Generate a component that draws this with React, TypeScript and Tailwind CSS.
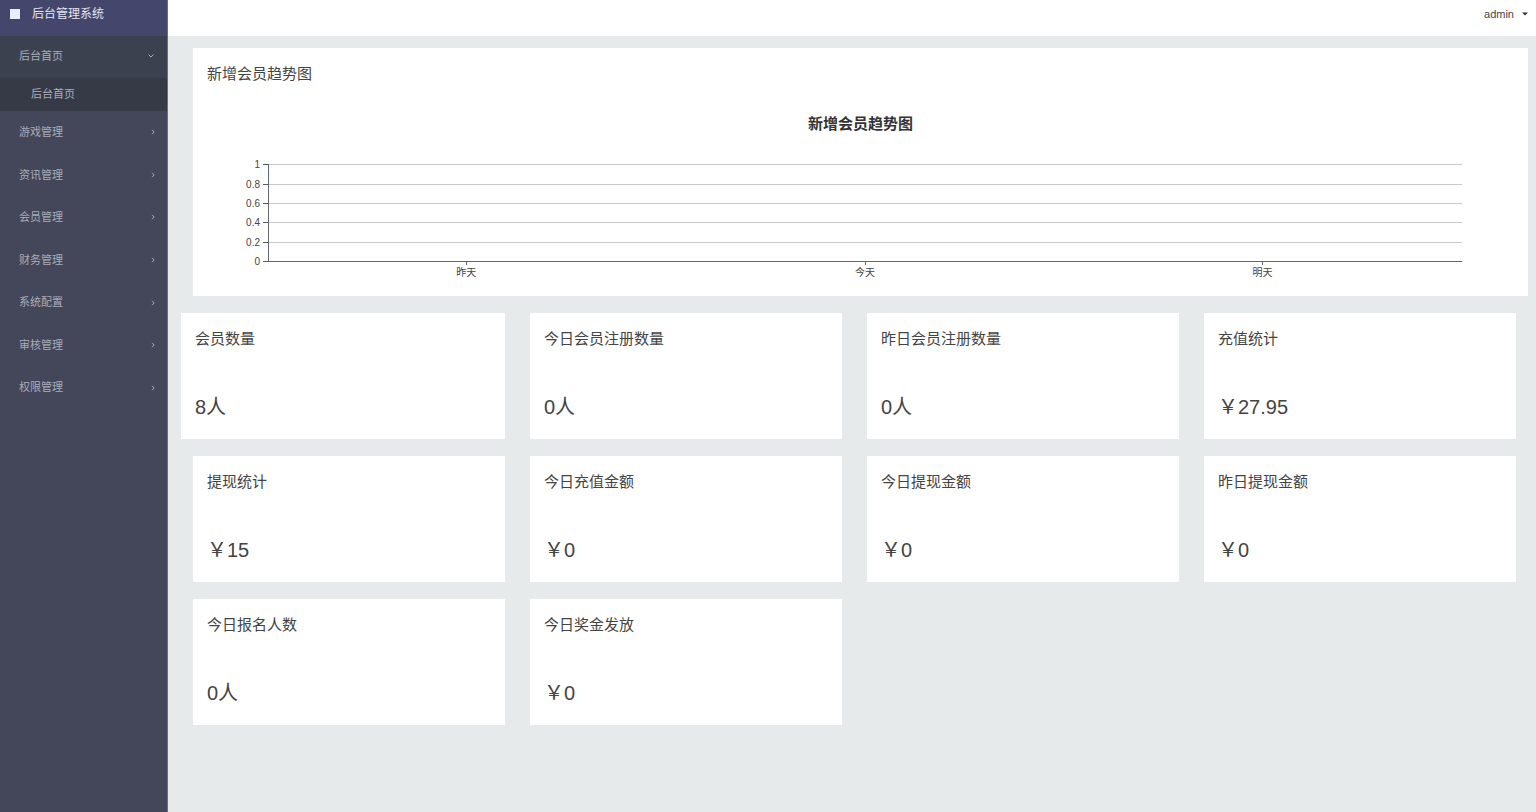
import React from "react";

const menu = ["游戏管理", "资讯管理", "会员管理", "财务管理", "系统配置", "审核管理", "权限管理"];

const stats = [
  { title: "会员数量", value: "8人" },
  { title: "今日会员注册数量", value: "0人" },
  { title: "昨日会员注册数量", value: "0人" },
  { title: "充值统计", value: "¥27.95" },
  { title: "提现统计", value: "¥15" },
  { title: "今日充值金额", value: "¥0" },
  { title: "今日提现金额", value: "¥0" },
  { title: "昨日提现金额", value: "¥0" },
  { title: "今日报名人数", value: "0人" },
  { title: "今日奖金发放", value: "¥0" },
];

const yTicks = [
  { label: "1", y: 4 },
  { label: "0.8", y: 24 },
  { label: "0.6", y: 43 },
  { label: "0.4", y: 62 },
  { label: "0.2", y: 82 },
  { label: "0", y: 101 },
];

const xTicks = [
  { label: "昨天", x: "16.6%" },
  { label: "今天", x: "50%" },
  { label: "明天", x: "83.3%" },
];

function Chevron({ down = false }: { down?: boolean }) {
  return (
    <svg width="8" height="8" viewBox="0 0 8 8" fill="none" stroke="currentColor" strokeWidth="1" aria-hidden="true">
      <path d={down ? "M1.5 2.5 L4 5 L6.5 2.5" : "M3 1.8 L5.2 4 L3 6.2"} />
    </svg>
  );
}

function Sidebar() {
  return (
    <aside className="flex w-[168px] shrink-0 flex-col border-r border-[#6b6e7e] bg-[#434759] text-[11px] text-[#a9acb8]">
      <div className="flex h-9 items-center gap-3 bg-[#44476b] pb-2 pl-[10px] text-[12px] text-[#e4e5f2]">
        <span className="h-[10px] w-[10px] bg-[#eceefb]" />
        <span>后台管理系统</span>
      </div>
      <nav>
        <button type="button" aria-expanded="true" className="flex h-[42px] w-full items-center justify-between bg-[#3c414f] pr-3 pb-[2px] pl-[19px]">
          <span>后台首页</span>
          <Chevron down />
        </button>
        <a href="#home" className="flex h-[33px] items-center bg-[#363a47] pl-[31px]">
          后台首页
        </a>
        <ul className="grid h-[298px] auto-rows-fr">
          {menu.map((item) => (
            <li key={item} className="flex">
              <button type="button" className="flex flex-1 items-center justify-between pr-[10px] pl-[19px]">
                <span>{item}</span>
                <Chevron />
              </button>
            </li>
          ))}
        </ul>
      </nav>
    </aside>
  );
}

function TrendChart() {
  return (
    <div className="pt-[26px]">
      <h3 className="text-center text-[15px] leading-6 font-bold text-[#333]">新增会员趋势图</h3>
      <div className="pt-6 pr-[66px] pl-[75px]">
        <svg className="block h-[120px] w-full overflow-visible text-[10px]" role="img" aria-label="新增会员趋势图">
          {yTicks.map(({ label, y }) => (
            <g key={label} shapeRendering="crispEdges">
              {label !== "0" && <line x1="0" x2="100%" y1={y} y2={y} stroke="#c9c9cb" />}
              <line x1="-5" x2="0" y1={y} y2={y} stroke="#55585e" />
              <text x="-8" y={y + 4} textAnchor="end" fill="#444">
                {label}
              </text>
            </g>
          ))}
          <g stroke="#64676d" shapeRendering="crispEdges">
            <line x1="0" x2="0" y1="4" y2="102" />
            <line x1="0" x2="100%" y1="101" y2="101" />
          </g>
          {xTicks.map(({ label, x }) => (
            <g key={label}>
              <line x1={x} x2={x} y1="101" y2="105" stroke="#64676d" shapeRendering="crispEdges" />
              <text x={x} y="116" textAnchor="middle" fill="#444">
                {label}
              </text>
            </g>
          ))}
        </svg>
      </div>
    </div>
  );
}

export default function App() {
  return (
    <div className="flex min-h-screen bg-[#e7eaeb] font-['Liberation_Sans','Noto_Sans_CJK_SC',sans-serif] text-[#444]">
      <Sidebar />
      <div className="flex min-w-0 flex-1 flex-col">
        <header className="flex h-9 items-center justify-end bg-white pr-2 pb-2">
          <button type="button" className="flex items-center gap-2 text-[11px] text-[#444]">
            admin
            <svg width="6" height="4" viewBox="0 0 6 4" fill="#333" aria-hidden="true">
              <path d="M0 0.5 H6 L3 3.5 Z" />
            </svg>
          </button>
        </header>
        <main className="pt-3 pr-2 pl-[25px]">
          <section className="bg-white pt-[14px] pb-4">
            <h2 className="px-[14px] text-[15px] leading-6">新增会员趋势图</h2>
            <TrendChart />
          </section>
          <div className="mt-[17px] grid grid-cols-4 gap-x-[25px] gap-y-[17px] pr-3">
            {stats.map(({ title, value }) => (
              <section key={title} className="bg-white px-[14px] pt-[14px] pb-4 first:-ml-3">
                <h2 className="text-[15px] leading-6">{title}</h2>
                <p className="mt-10 text-[20px] leading-8">{value.replace("¥", "\uFFE5")}</p>
              </section>
            ))}
          </div>
        </main>
      </div>
    </div>
  );
}
